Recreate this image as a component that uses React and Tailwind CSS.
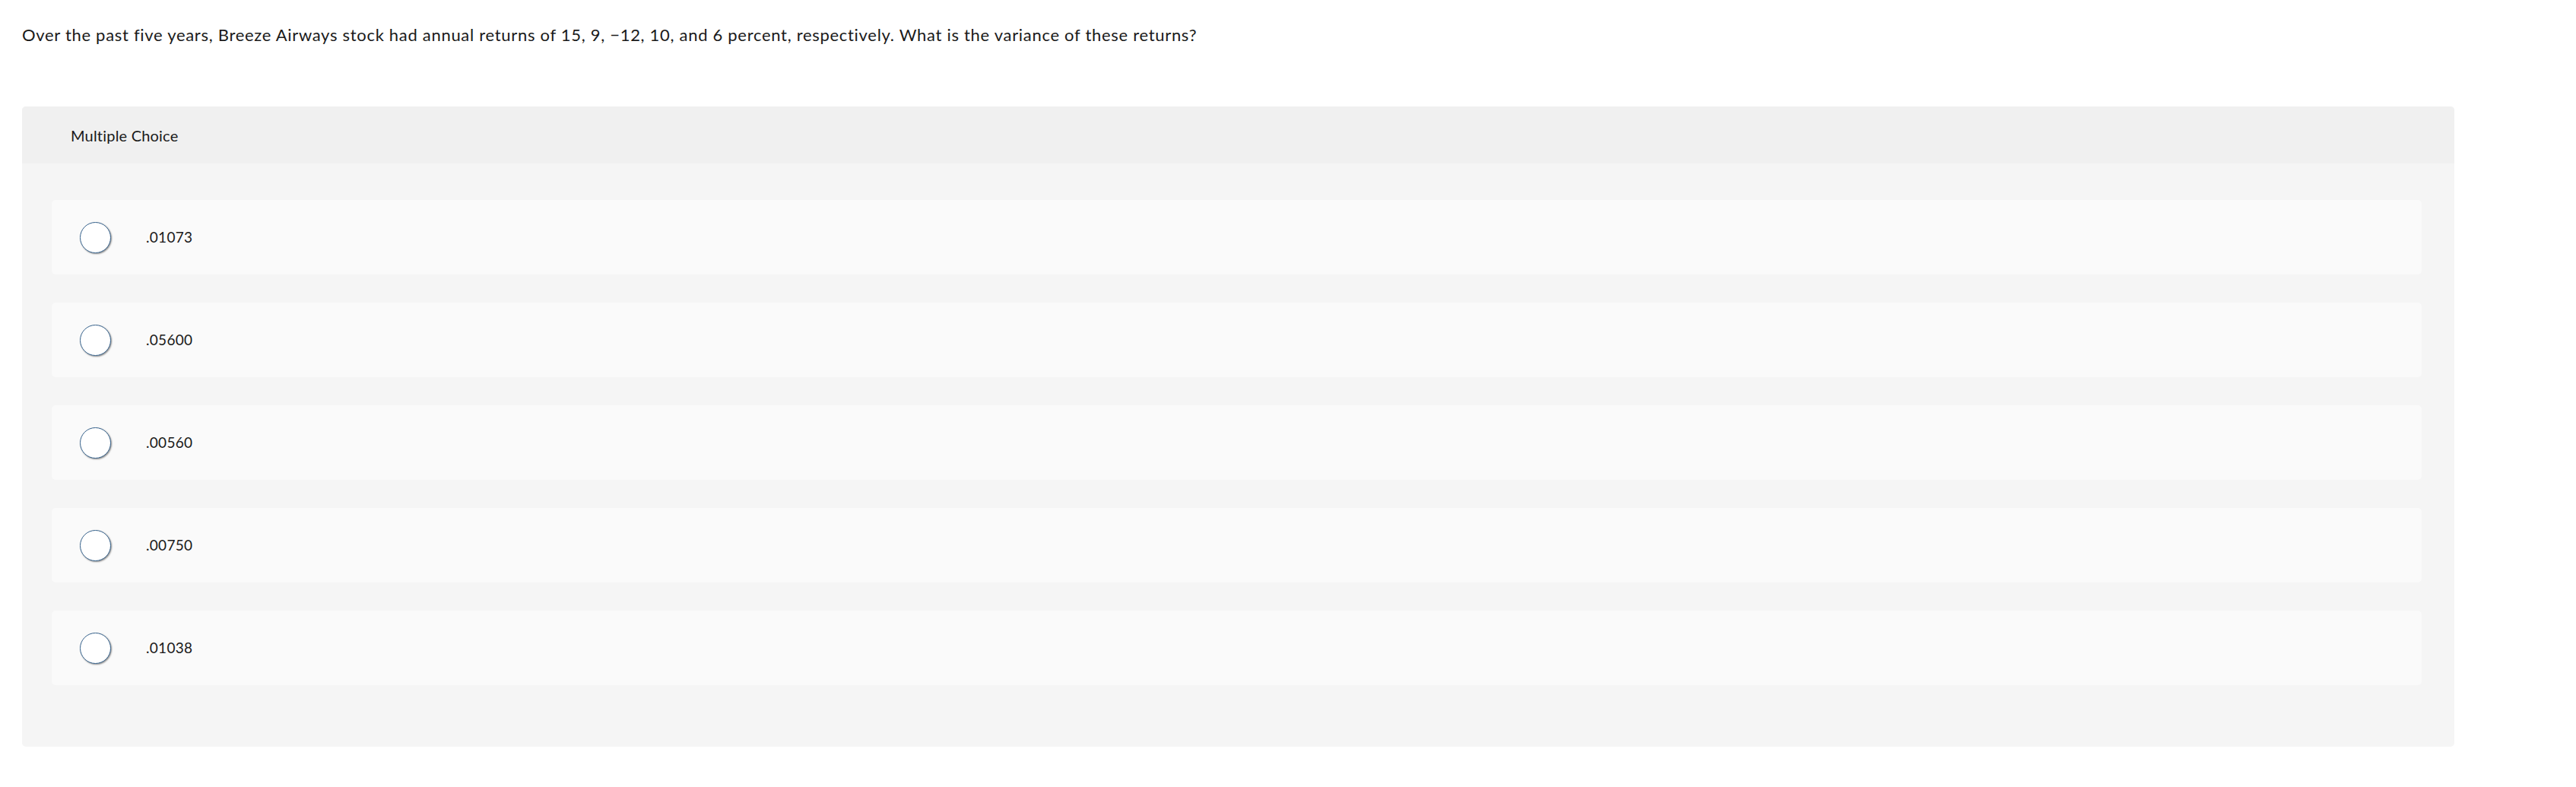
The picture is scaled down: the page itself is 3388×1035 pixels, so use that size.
const options = ['.01073', '.05600', '.00560', '.00750', '.01038'];

export default function App() {
  return (
    <div className="min-h-screen bg-white text-[#1a1a1a] pl-[29px]" style={{ fontFamily: 'Lato, "Open Sans", sans-serif' }}>
      <p className="pt-[31px] text-[22px] leading-[30px] tracking-[0.7px]">
        Over the past five years, Breeze Airways stock had annual returns of 15, 9, −12, 10, and 6 percent, respectively. What is the variance of these returns?
      </p>

      <div className="mt-[79px] w-[3199px] rounded-[5px] bg-[#f5f5f5] overflow-hidden">
        {/* header */}
        <div className="h-[75px] flex items-center pl-[64px] bg-[#f0f0f0]">
          <span className="text-[20px] tracking-[0.2px]">Multiple Choice</span>
        </div>

        {/* choices */}
        <div className="flex flex-col gap-[37px] pt-[48px] pl-[39px] pr-[43px] pb-[81px]">
          {options.map((opt) => (
            <label key={opt} className="h-[98px] flex items-center rounded-[5px] bg-[#fafafa] cursor-pointer">
              <span className="ml-[37px] w-[41px] h-[41px] rounded-full bg-white border-[1.5px] border-[#3a6690] shadow-[1px_1px_2px_rgba(0,0,0,0.45)] shrink-0" />
              <span className="ml-[46px] text-[19px] tracking-[0.3px]">{opt}</span>
            </label>
          ))}
        </div>
      </div>
    </div>
  );
}
